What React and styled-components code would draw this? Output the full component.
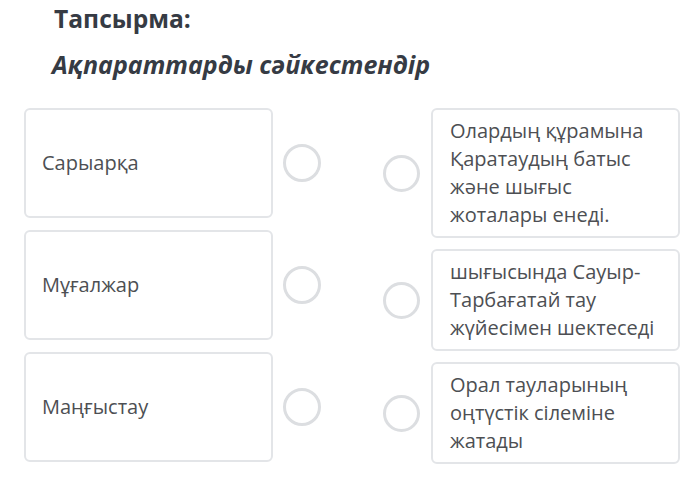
import React from "react";
import styled, { createGlobalStyle } from "styled-components";

const Global = createGlobalStyle`
  html, body { margin: 0; padding: 0; background: #ffffff; }
  body { font-family: "Open Sans", "Noto Sans", sans-serif; }
`;

const Page = styled.div`
  width: 696px;
  height: 477px;
  box-sizing: border-box;
  padding: 2px 17px 0 24px;
  overflow: hidden;
`;

const Header = styled.header`
  padding-left: 30px;
  color: #363b44;
`;

const Title = styled.h1`
  margin: 0;
  font-size: 24.6px;
  line-height: 34px;
  font-weight: 700;
`;

const Subtitle = styled.h2`
  margin: 11px 0 0 -2px;
  font-size: 25px;
  line-height: 34px;
  font-weight: 700;
  font-style: italic;
`;

const Board = styled.div`
  display: flex;
  gap: 62px;
  margin-top: 27px;
`;

const Column = styled.div`
  display: flex;
  flex-direction: column;
  gap: ${(p) => p.$gap}px;
`;

const Row = styled.div`
  display: flex;
  align-items: center;
  gap: ${(p) => p.$gap}px;
`;

const Card = styled.div`
  box-sizing: border-box;
  width: 249px;
  min-height: ${(p) => (p.$fixed ? "110px" : "auto")};
  border: 2px solid #e3e5e8;
  border-radius: 6px;
  background: #ffffff;
  padding: ${(p) => (p.$fixed ? "0 16px" : "7px 12px 7px 17px")};
  display: flex;
  align-items: center;
  color: #4d4f53;
  font-size: 20px;
  line-height: 28px;
`;

const Dot = styled.span`
  box-sizing: border-box;
  flex: none;
  width: ${(p) => p.$size}px;
  height: ${(p) => p.$size}px;
  border: 3px solid #dcdee1;
  border-radius: 50%;
  background: #ffffff;
`;

const left = ["Сарыарқа", "Мұғалжар", "Маңғыстау"];
const right = [
  "Олардың құрамына Қаратаудың батыс және шығыс жоталары енеді.",
  "шығысында Сауыр-Тарбағатай тау жүйесімен шектеседі",
  "Орал тауларының оңтүстік сілеміне жатады",
];

export default function App() {
  return (
    <>
      <Global />
      <Page>
        <Header>
          <Title>Тапсырма:</Title>
          <Subtitle>Ақпараттарды сәйкестендір</Subtitle>
        </Header>
        <Board>
          <Column $gap={12}>
            {left.map((t) => (
              <Row key={t} $gap={10}>
                <Card $fixed>{t}</Card>
                <Dot $size={38} />
              </Row>
            ))}
          </Column>
          <Column $gap={11}>
            {right.map((t) => (
              <Row key={t} $gap={11}>
                <Dot $size={37} />
                <Card>{t}</Card>
              </Row>
            ))}
          </Column>
        </Board>
      </Page>
    </>
  );
}
